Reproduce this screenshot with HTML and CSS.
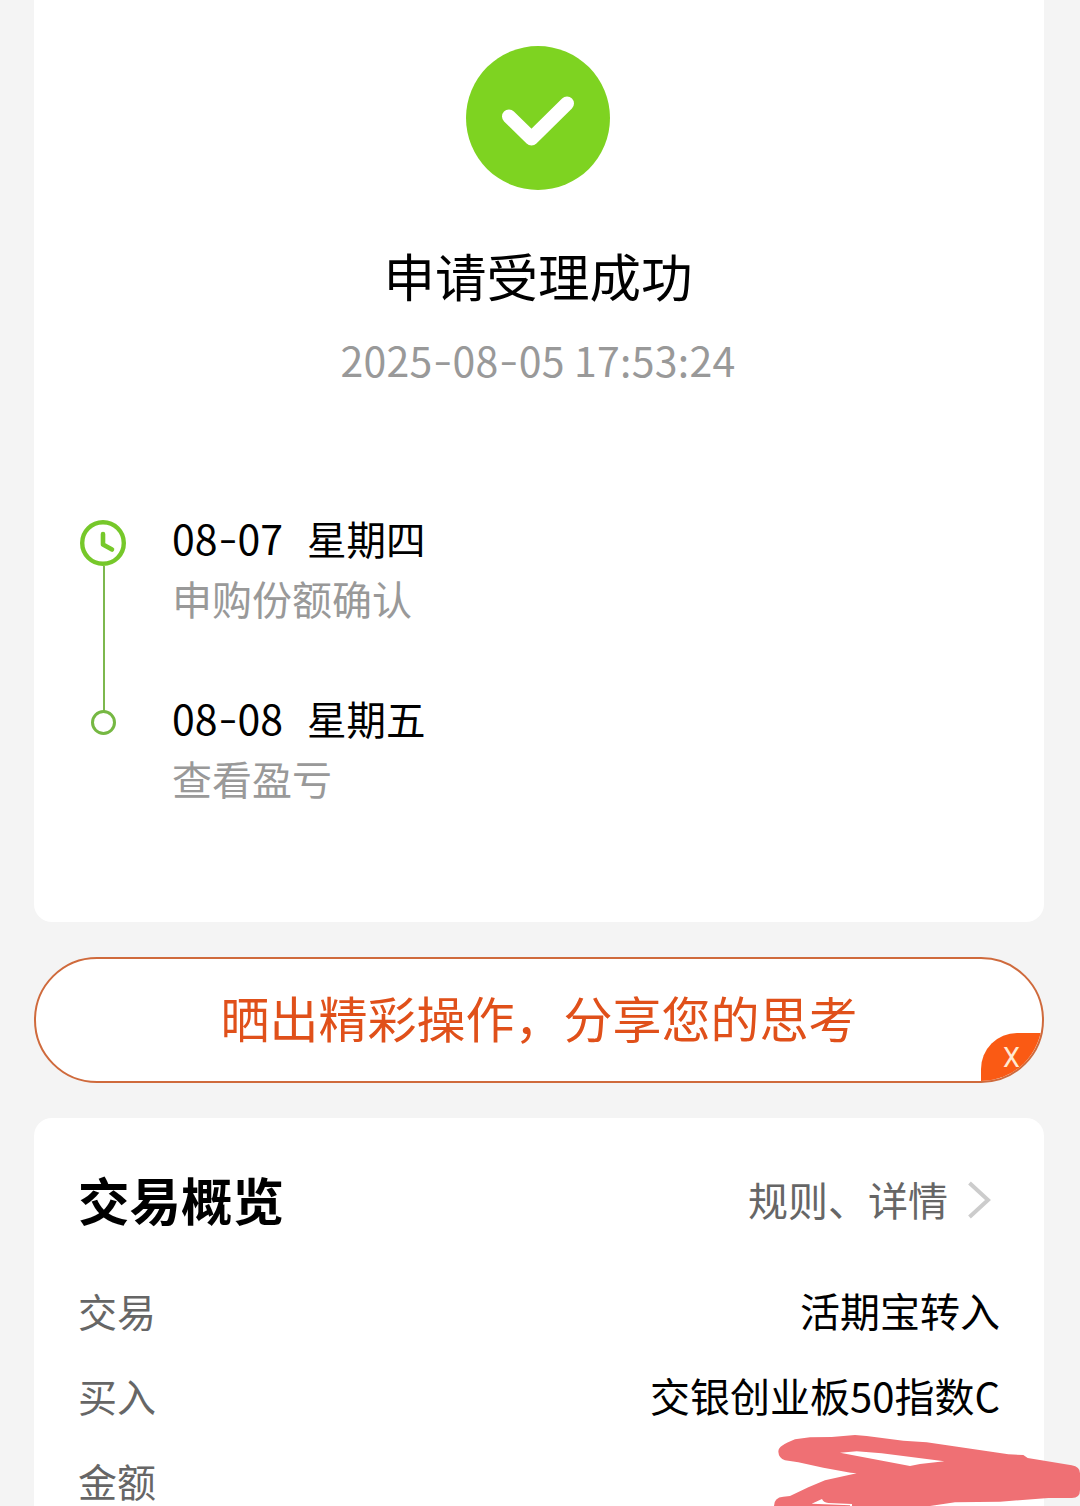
FILE: index.html
```
<!DOCTYPE html>
<html lang="zh-CN">
	<head>
		<meta charset="UTF-8">
		<title>申请受理成功</title>
		<link rel="stylesheet" href="styles.css">
	</head>
	<body>
		<div class="page">
			<div class="card result">
				<svg class="success" viewBox="0 0 144 144">
					<circle cx="72" cy="72" r="72" fill="#7ed321"/>
					<path d="M43 70.500L65.500 92.500L101 57.500" fill="none" stroke="#fff" stroke-width="14" stroke-linecap="round" stroke-linejoin="round"/>
				</svg>
				<h1 class="title">申请受理成功</h1>
				<p class="time">2025<span class="dash">-</span>08<span class="dash">-</span>05 17:53:24</p>
				<ul class="steps">
					<li class="step">
						<div class="mark">
							<svg class="clock" viewBox="0 0 46 46">
								<circle cx="23" cy="23" r="20.800" fill="none" stroke="#76c82a" stroke-width="4.400"/>
								<path d="M23 14V24.500L32 29.500" fill="none" stroke="#76c82a" stroke-width="4.600" stroke-linecap="round" stroke-linejoin="round"/>
							</svg>
							<i class="line"></i>
						</div>
						<div class="info">
							<p class="day">08<span class="dash">-</span>07<span class="week">星期四</span></p>
							<p class="desc">申购份额确认</p>
						</div>
					</li>
					<li class="step last">
						<div class="mark"><i class="dot"></i></div>
						<div class="info">
							<p class="day">08<span class="dash">-</span>08<span class="week">星期五</span></p>
							<p class="desc">查看盈亏</p>
						</div>
					</li>
				</ul>
			</div>
			<a class="share" href="#">
				晒出精彩操作，分享您的思考
				<span class="close">X</span>
			</a>
			<div class="card overview">
				<div class="head">
					<h2>交易概览</h2>
					<a class="more" href="#">
						规则、详情
						<svg class="arrow" viewBox="0 0 24 38">
							<path d="M1.500 2L20 19L1.500 36" fill="none" stroke="#ccc" stroke-width="4"/>
						</svg>
					</a>
				</div>
				<div class="row"><span class="name">交易</span><span>活期宝转入</span></div>
				<div class="row"><span class="name">买入</span><span>交银创业板50指数C</span></div>
				<div class="row"><span class="name">金额</span></div>
			</div>
			<!-- 塗抹遮住金額 -->
			<svg class="scribble" viewBox="0 0 960 288">
				<path fill="#ef7074" fill-rule="evenodd" d="M55 125C56 110 70 103 105 88L150 82L215 81L285 75L320 78L430 92L500 97L745 133L790 135L803 144L935 166Q960 170 960 190V240Q960 264 936 264H865L720 275L585 277L510 288H276V282L205 279Q190 278 186 267L155 281L270 286V288H42Q42 262 70 260L90 258L145 232L195 211L290 190L272 188L190 173L115 157L75 151Q56 144 55 125ZM240 128L450 168L480 162L553 154L365 130L290 124Z"/>
			</svg>
		</div>
	</body>
</html>
```
FILE: styles.css
```
* {
	margin: 0;
	padding: 0;
	box-sizing: border-box;
}
body {
	background-color: #f4f4f4;
	color: #000;
	font-family: "Noto Sans CJK SC", sans-serif;
	font-size: 40px;
}
a {
	color: inherit;
	text-decoration: none;
}
.page {
	position: relative;
	height: 1506px;
	padding: 0 36px 0 34px;
	overflow: hidden;
}
.card {
	background-color: #fff;
	border-radius: 18px;
}
.result {
	height: 922px;
	padding: 46px 46px 0;
	border-radius: 0 0 18px 18px;
}
.success {
	display: block;
	width: 144px;
	height: 144px;
	margin: 0 auto;
	transform: translateX(-1px);
}
.title {
	margin-top: 55px;
	padding-right: 2px;
	font-size: 51.5px;
	font-weight: 400;
	line-height: 60px;
	text-align: center;
}
.time {
	margin-top: 24px;
	padding-right: 2px;
	color: #999;
	font-size: 41px;
	line-height: 60px;
	letter-spacing: 0.25px;
	text-align: center;
}
.dash {
	display: inline-block;
	width: 20px;
	text-align: center;
	transform: translateY(-2px) scaleX(1.3);
}
.steps {
	margin-top: 118px;
	list-style: none;
}
.step {
	display: flex;
	height: 180px;
}
.mark {
	display: flex;
	flex-direction: column;
	align-items: center;
	width: 46px;
	margin-right: 46px;
	padding-top: 13px;
}
.clock {
	flex: none;
	width: 46px;
	height: 46px;
}
.line {
	flex: none;
	width: 2px;
	height: 145px;
	margin-left: 2px;
	background-color: #7db84e;
}
.last .mark {
	padding-top: 23px;
}
.dot {
	width: 25px;
	height: 25px;
	border: 3px solid #76b843;
	border-radius: 50%;
}
.day {
	font-size: 41px;
	line-height: 60px;
}
.week {
	margin-left: 24px;
	font-size: 39.5px;
}
.desc {
	color: #999;
	line-height: 60px;
}
.share {
	display: block;
	position: relative;
	height: 126px;
	margin: 35px 0;
	border: 2px solid #cf6a3c;
	border-radius: 63px;
	background-color: #fff;
	color: #e0501a;
	font-size: 49px;
	line-height: 116px;
	text-align: center;
	overflow: hidden;
}
.close {
	position: absolute;
	right: 0;
	bottom: 0;
	width: 61px;
	height: 48px;
	border-radius: 36px 0 0 0;
	background-color: #fa5a14;
	color: #ffe9d2;
	font-family: Roboto, sans-serif;
	font-size: 27px;
	line-height: 50px;
}
.overview {
	height: 420px;
	padding: 41px 44px 0;
}
.head {
	display: flex;
	justify-content: space-between;
	height: 109px;
	line-height: 80px;
}
.head h2 {
	font-size: 51.5px;
}
.more {
	display: flex;
	margin-right: 8px;
	color: #666;
}
.arrow {
	width: 24px;
	height: 38px;
	margin: 22px 0 0 20px;
}
.row {
	display: flex;
	justify-content: space-between;
	height: 85px;
	line-height: 85px;
}
.name {
	color: #666;
	font-size: 39px;
}
.scribble {
	position: absolute;
	left: 760px;
	top: 1410px;
	width: 320px;
	height: 96px;
}
```
